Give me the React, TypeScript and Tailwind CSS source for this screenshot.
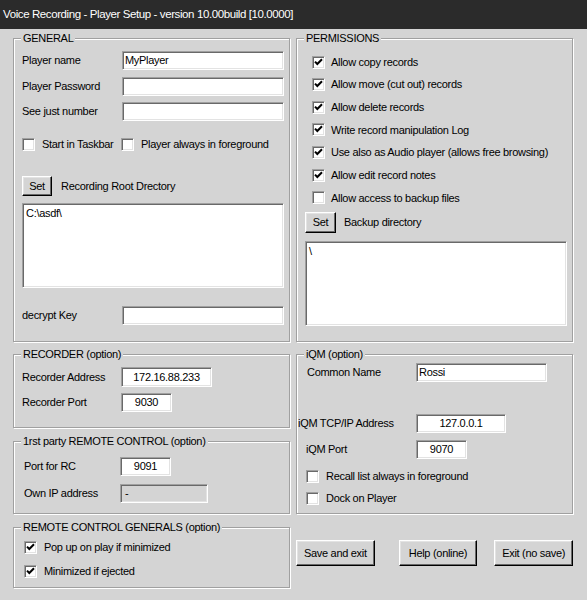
import React from 'react';

const sunken =
  'border border-t-[#a0a0a0] border-l-[#a0a0a0] border-r-white border-b-white shadow-[inset_1px_1px_0_#696969,inset_-1px_-1px_0_#e3e3e3]';
const raised =
  'border border-t-white border-l-white border-r-black border-b-black shadow-[inset_-1px_-1px_0_#696969,inset_1px_1px_0_#e3e3e3] bg-[#d4d4d4] flex items-center justify-center';

function GroupBox({ title, className, children }: { title: string; className: string; children: React.ReactNode }) {
  return (
    <fieldset className={`border border-[#a0a0a0] shadow-[inset_1px_1px_0_#fff,1px_1px_0_#fff] min-w-0 ${className}`}>
      <legend className="ml-[7px] px-[2px] leading-[13px] bg-[#d4d4d4]">{title}</legend>
      {children}
    </fieldset>
  );
}

function Check({ checked }: { checked?: boolean }) {
  return (
    <div className={`w-[13px] h-[13px] bg-white shrink-0 flex items-center justify-center ${sunken}`}>
      {checked && (
        <svg width="9" height="9" viewBox="0 0 9 9">
          <path d="M1 3.6l2.3 2.4L8 1.2" stroke="#000" strokeWidth="2" fill="none" />
        </svg>
      )}
    </div>
  );
}

function CheckRow({ label, checked, className }: { label: string; checked?: boolean; className: string }) {
  return (
    <div className={`flex items-center ${className}`}>
      <Check checked={checked} />
      <span className="ml-[7px] leading-[13px] whitespace-nowrap">{label}</span>
    </div>
  );
}

const permissions: [string, boolean][] = [
  ['Allow copy records', true],
  ['Allow move (cut out) records', true],
  ['Allow delete records', true],
  ['Write record manipulation Log', true],
  ['Use also as Audio player (allows free browsing)', true],
  ['Allow edit record notes', true],
  ['Allow access to backup files', false],
];

export default function App() {
  return (
    <div className="w-[587px] h-[600px] overflow-hidden bg-[#d4d4d4] text-black text-[11px] tracking-[-0.3px] font-['Liberation_Sans',Arial,sans-serif]">
      {/* title bar */}
      <div className="h-[29px] bg-[#2b2b2b] text-white flex items-center pl-[3px] text-[11.5px] tracking-[-0.4px] whitespace-nowrap">
        Voice Recording - Player Setup - version 10.00build [10.0000]
      </div>

      <div className="flex gap-[6px] pl-[13px] pt-[3px]">
        {/* left column */}
        <div className="w-[277px] flex flex-col">
          <GroupBox title="GENERAL" className="h-[310px]">
            <div className="pl-[8px] pr-[5px]">
              <div className="flex items-center mt-[6px] h-[19px]">
                <span className="w-[100px]">Player name</span>
                <div className={`w-[162px] h-[19px] bg-white pl-[2px] flex items-center ${sunken}`}>MyPlayer</div>
              </div>
              <div className="flex items-center mt-[7px] h-[19px]">
                <span className="w-[100px]">Player Password</span>
                <div className={`w-[162px] h-[19px] bg-white ${sunken}`} />
              </div>
              <div className="flex items-center mt-[6px] h-[19px]">
                <span className="w-[100px]">See just number</span>
                <div className={`w-[162px] h-[19px] bg-white ${sunken}`} />
              </div>
              <div className="flex items-center mt-[17px] h-[13px]">
                <CheckRow label="Start in Taskbar" className="w-[99px]" />
                <CheckRow label="Player always in foreground" className="" />
              </div>
              <div className="flex items-center mt-[25px]">
                <div className={`w-[30px] h-[20px] ${raised}`}>Set</div>
                <span className="ml-[9px]">Recording Root Drectory</span>
              </div>
              <div className={`mt-[7px] w-[262px] h-[85px] bg-white px-[3px] pt-[3px] leading-[13px] ${sunken}`}>C:\asdf\</div>
              <div className="flex items-center mt-[18px] h-[19px]">
                <span className="w-[100px]">decrypt Key</span>
                <div className={`w-[162px] h-[19px] bg-white ${sunken}`} />
              </div>
            </div>
          </GroupBox>

          <GroupBox title="RECORDER (option)" className="h-[80px] mt-[6px]">
            <div className="pl-[8px]">
              <div className="flex items-center mt-[6px]">
                <span className="w-[99px]">Recorder Address</span>
                <div className={`w-[91px] h-[20px] bg-white flex items-center justify-center ${sunken}`}>172.16.88.233</div>
              </div>
              <div className="flex items-center mt-[6px]">
                <span className="w-[99px]">Recorder Port</span>
                <div className={`w-[51px] h-[19px] bg-white flex items-center justify-center ${sunken}`}>9030</div>
              </div>
            </div>
          </GroupBox>

          <GroupBox title="1rst party REMOTE CONTROL (option)" className="h-[79px] mt-[7px]">
            <div className="pl-[10px]">
              <div className="flex items-center mt-[9px]">
                <span className="w-[96px]">Port for RC</span>
                <div className={`w-[51px] h-[19px] bg-white flex items-center justify-center ${sunken}`}>9091</div>
              </div>
              <div className="flex items-center mt-[8px]">
                <span className="w-[96px]">Own IP address</span>
                <div className={`w-[88px] h-[19px] pl-[4px] flex items-center ${sunken}`}>-</div>
              </div>
            </div>
          </GroupBox>

          <GroupBox title="REMOTE CONTROL GENERALS (option)" className="h-[67px] mt-[7px]">
            <div className="pl-[10px]">
              <CheckRow label="Pop up on play if minimized" checked className="mt-[6.5px]" />
              <CheckRow label="Minimized if ejected" checked className="mt-[11px]" />
            </div>
          </GroupBox>
        </div>

        {/* right column */}
        <div className="w-[277px] flex flex-col">
          <GroupBox title="PERMISSIONS" className="h-[310px]">
            <div className="mt-[5.7px]">
              {permissions.map(([label, on]) => (
                <div key={label} className="h-[22.67px] flex items-center pl-[15px]">
                  <Check checked={on} />
                  <span className="ml-[6px] whitespace-nowrap">{label}</span>
                </div>
              ))}
            </div>
            <div className="pl-[8px]">
              <div className="flex items-center mt-[2.5px]">
                <div className={`w-[31px] h-[21px] ${raised}`}>Set</div>
                <span className="ml-[8px]">Backup directory</span>
              </div>
              <div className={`mt-[8px] w-[262px] h-[85px] bg-white px-[3px] pt-[3px] leading-[13px] ${sunken}`}>\</div>
            </div>
          </GroupBox>

          <GroupBox title="iQM (option)" className="h-[166px] mt-[6px]">
            <div className="flex items-center mt-[2px] pl-[10px]">
              <span className="w-[109px]">Common Name</span>
              <div className={`w-[131px] h-[19px] bg-white pl-[2px] flex items-center ${sunken}`}>Rossi</div>
            </div>
            <div className="flex items-center mt-[32px] pl-[1px]">
              <span className="w-[118px]">iQM TCP/IP Address</span>
              <div className={`w-[90px] h-[19px] bg-white flex items-center justify-center ${sunken}`}>127.0.0.1</div>
            </div>
            <div className="flex items-center mt-[7px] pl-[9px]">
              <span className="w-[110px]">iQM Port</span>
              <div className={`w-[51px] h-[19px] bg-white flex items-center justify-center ${sunken}`}>9070</div>
            </div>
            <div className="pl-[9px]">
              <CheckRow label="Recall list always in foreground" className="mt-[10.5px]" />
              <CheckRow label="Dock on Player" className="mt-[9px]" />
            </div>
          </GroupBox>

          <div className="flex mt-[26px]">
            <div className={`w-[79px] h-[26px] ${raised}`}>Save and exit</div>
            <div className={`w-[79px] h-[26px] ml-[24px] ${raised}`}>Help (online)</div>
            <div className={`w-[79px] h-[26px] ml-[17px] ${raised}`}>Exit (no save)</div>
          </div>
        </div>
      </div>
    </div>
  );
}
